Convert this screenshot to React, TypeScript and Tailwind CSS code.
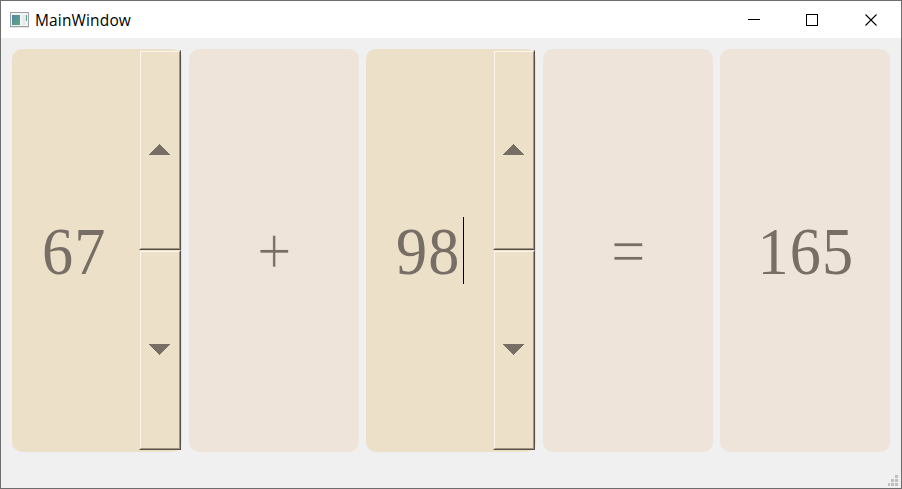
import type { ReactNode } from 'react';

function AppIcon() {
  return (
    <svg width="19" height="16" viewBox="0 0 19 16" shapeRendering="crispEdges">
      <defs>
        <linearGradient id="pane" x1="0" y1="0" x2="1" y2="1">
          <stop offset="0" stopColor="#5584a8" />
          <stop offset="1" stopColor="#58ad7c" />
        </linearGradient>
      </defs>
      <rect width="19" height="15" fill="#9aa0a6" />
      <rect x="1" y="1" width="17" height="13" fill="#f3f4f4" />
      <rect x="2" y="3" width="8" height="10" fill="url(#pane)" />
      <rect x="12" y="3" width="4" height="10" fill="#e8eaeb" />
      <rect x="16" y="3" width="1" height="6" fill="#62a38c" />
      <rect y="15" width="19" height="1" fill="#e6e6e6" />
    </svg>
  );
}

function StepButton({ down = false }: { down?: boolean }) {
  return (
    <div className="h-[200px] w-[42px] border border-t-[#ede0c8] border-r-[#57504a] border-b-[#57504a] border-l-[#ede0c8]">
      <div className="h-full w-full border border-t-[#fff8ea] border-r-[#a0967f] border-b-[#a0967f] border-l-[#fff8ea] pt-[92px] pl-2">
        <svg width="21" height="11" viewBox="0 0 21 11" shapeRendering="crispEdges" fill="#776e65">
          {Array.from({ length: 11 }, (_, i) => (
            <rect key={i} x={10 - i} y={down ? 10 - i : i} width={2 * i + 1} height="1" />
          ))}
        </svg>
      </div>
    </div>
  );
}

const glyphs =
  "block whitespace-nowrap font-['Liberation_Serif',serif] text-[68px] leading-[68px] text-[#776e65]";
const digits = `${glyphs} tracking-[1.2px] scale-x-[0.915]`;
const operator = `${glyphs} scale-x-90 [-webkit-text-stroke:0.7px_#eee4da]`;

function SpinBox({ value, caret = false }: { value: string; caret?: boolean }) {
  return (
    <div className="flex h-[403px] w-[170px] rounded-[10px] bg-[#ede0c8]">
      <div className="flex w-[127px] items-start pt-[168px] pl-[30px]">
        <div className="w-[67px]">
          <span className={`${digits} origin-left`}>{value}</span>
        </div>
        {caret && <span className="h-[67px] w-px bg-black" />}
      </div>
      <div className="pt-px">
        <StepButton />
        <StepButton down />
      </div>
    </div>
  );
}

function Label({ children }: { children: ReactNode }) {
  return (
    <div className="flex h-[403px] w-[170px] justify-center rounded-[10px] bg-[#eee4da] pt-[168px] pl-px">
      {children}
    </div>
  );
}

export default function App() {
  return (
    <div className="flex h-[489px] w-[902px] flex-col border border-[#6e6d6e] bg-[#f0f0f0]">
      <header className="flex h-[37px] items-center bg-white pl-[9px]">
        <AppIcon />
        <span className="ml-[6px] font-['Open_Sans','Noto_Sans',sans-serif] text-[15.5px] leading-5 tracking-[0.15px] text-black">
          MainWindow
        </span>
        <svg className="ml-auto mr-[23px]" width="130" height="14" viewBox="0 0 130 14" fill="none" stroke="#000">
          <path d="M0 6.5h12M58.5 1.5h11v11h-11z" shapeRendering="crispEdges" />
          <path d="M117.5 1.5l11 11M128.5 1.5l-11 11" strokeWidth="1.1" />
        </svg>
      </header>
      <main className="flex gap-[7px] pt-[11px] pl-[11px]">
        <SpinBox value="67" />
        <Label>
          <span className={operator}>+</span>
        </Label>
        <SpinBox value="98" caret />
        <Label>
          <span className={operator}>=</span>
        </Label>
        <Label>
          <span className={digits}>165</span>
        </Label>
      </main>
      <svg className="mt-auto mr-[3px] mb-[2px] self-end" width="10" height="11" viewBox="0 0 10 11" fill="#bfbfbf" shapeRendering="crispEdges">
        <path d="M7 0h3v3h-3zM7 4h3v3h-3zM3 4h3v3h-3zM7 8h3v3h-3zM3 8h3v3h-3zM0 8h2v3h-2z" />
      </svg>
    </div>
  );
}
